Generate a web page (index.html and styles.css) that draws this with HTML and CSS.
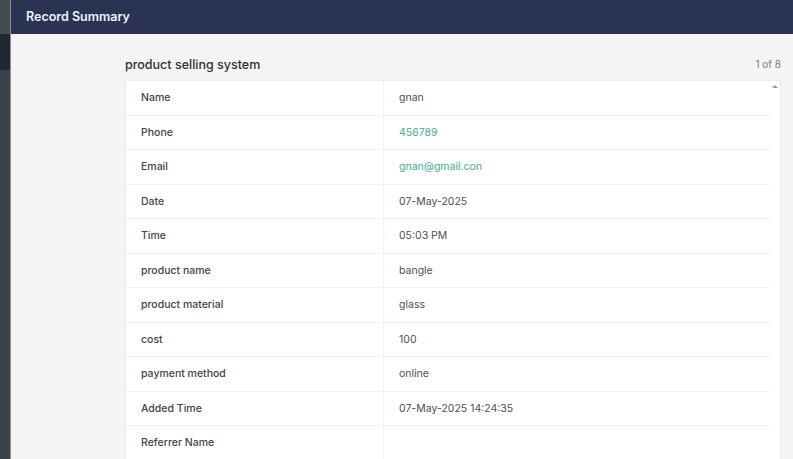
FILE: index.html
```html
<!DOCTYPE html>
<html>
<head>
<meta charset="utf-8">
<link rel="stylesheet" href="styles.css">
</head>
<body>
<div class="app">
  <div class="rail">
    <div class="rail-top"></div>
    <div class="rail-active"></div>
    <div class="rail-rest"></div>
  </div>
  <div class="main">
    <header class="topbar">Record Summary</header>
    <section class="panel">
      <div class="panel-head">
        <h2 class="title">product selling system</h2>
        <span class="pager">1 of 8</span>
      </div>
      <div class="card">
        <div class="table">
          <div class="row"><div class="label">Name</div><div class="value">gnan</div></div>
          <div class="row"><div class="label">Phone</div><div class="value link">456789</div></div>
          <div class="row"><div class="label">Email</div><div class="value link">gnan@gmail.con</div></div>
          <div class="row"><div class="label">Date</div><div class="value">07-May-2025</div></div>
          <div class="row"><div class="label">Time</div><div class="value">05:03 PM</div></div>
          <div class="row"><div class="label">product name</div><div class="value">bangle</div></div>
          <div class="row"><div class="label">product material</div><div class="value">glass</div></div>
          <div class="row"><div class="label">cost</div><div class="value">100</div></div>
          <div class="row"><div class="label">payment method</div><div class="value">online</div></div>
          <div class="row"><div class="label">Added Time</div><div class="value">07-May-2025 14:24:35</div></div>
          <div class="row"><div class="label">Referrer Name</div><div class="value"></div></div>
        </div>
        <div class="scrollbar"><span class="arrow"></span></div>
      </div>
    </section>
  </div>
</div>
</body>
</html>
```
FILE: styles.css
```css
* { box-sizing: border-box; }
html, body { margin: 0; padding: 0; }
body {
  font-family: Inter, "Noto Sans", sans-serif;
  background: #f4f4f5;
  width: 793px;
  height: 459px;
  overflow: hidden;
}
.app {
  display: flex;
  height: 459px;
}
.rail {
  width: 11px;
  flex: none;
  display: flex;
  flex-direction: column;
  border-right: 1px solid #8a9098;
}
.rail-top { height: 34px; background: #464b50; }
.rail-active { height: 36px; background: #1f2833; }
.rail-rest { flex: 1; background: #3a424a; }
.main {
  flex: 1;
  display: flex;
  flex-direction: column;
  min-width: 0;
}
.topbar {
  height: 34px;
  flex: none;
  background: #2a3353;
  color: #f1f2f6;
  font-size: 12.5px;
  font-weight: 600;
  padding-left: 15px;
  display: flex;
  align-items: center;
  padding-bottom: 2px;
}
.panel {
  flex: 1;
  background: #f4f4f5;
  padding: 21px 12px 0 114px;
  display: flex;
  flex-direction: column;
}
.panel-head {
  display: flex;
  justify-content: space-between;
  align-items: center;
  height: 18px;
  margin-bottom: 7px;
}
.title {
  margin: 0;
  font-size: 12.5px;
  font-weight: 500;
  color: #2f3033;
}
.pager {
  font-size: 10px;
  color: #7a7a7a;
}
.card {
  flex: 1;
  display: flex;
  background: #fff;
  border: 1px solid #ececec;
  border-bottom: none;
}
.table {
  flex: 1;
}
.row {
  display: flex;
  height: 34.5px;
  border-bottom: 1px solid #f1f1f1;
}
.label {
  width: 258px;
  flex: none;
  padding-left: 15px;
  display: flex;
  align-items: center;
  font-size: 10.5px;
  font-weight: 500;
  color: #444;
  border-right: 1px solid #f1f1f1;
}
.value {
  flex: 1;
  padding-left: 15px;
  display: flex;
  align-items: center;
  font-size: 10.5px;
  color: #4f4f4f;
}
.value.link { color: #3fae92; }
.scrollbar {
  width: 10px;
  flex: none;
  position: relative;
  background: #fff;
}
.arrow {
  position: absolute;
  top: 4px;
  left: 2px;
  width: 0;
  height: 0;
  border-left: 3px solid transparent;
  border-right: 3px solid transparent;
  border-bottom: 3px solid #9a9a9a;
}
```
